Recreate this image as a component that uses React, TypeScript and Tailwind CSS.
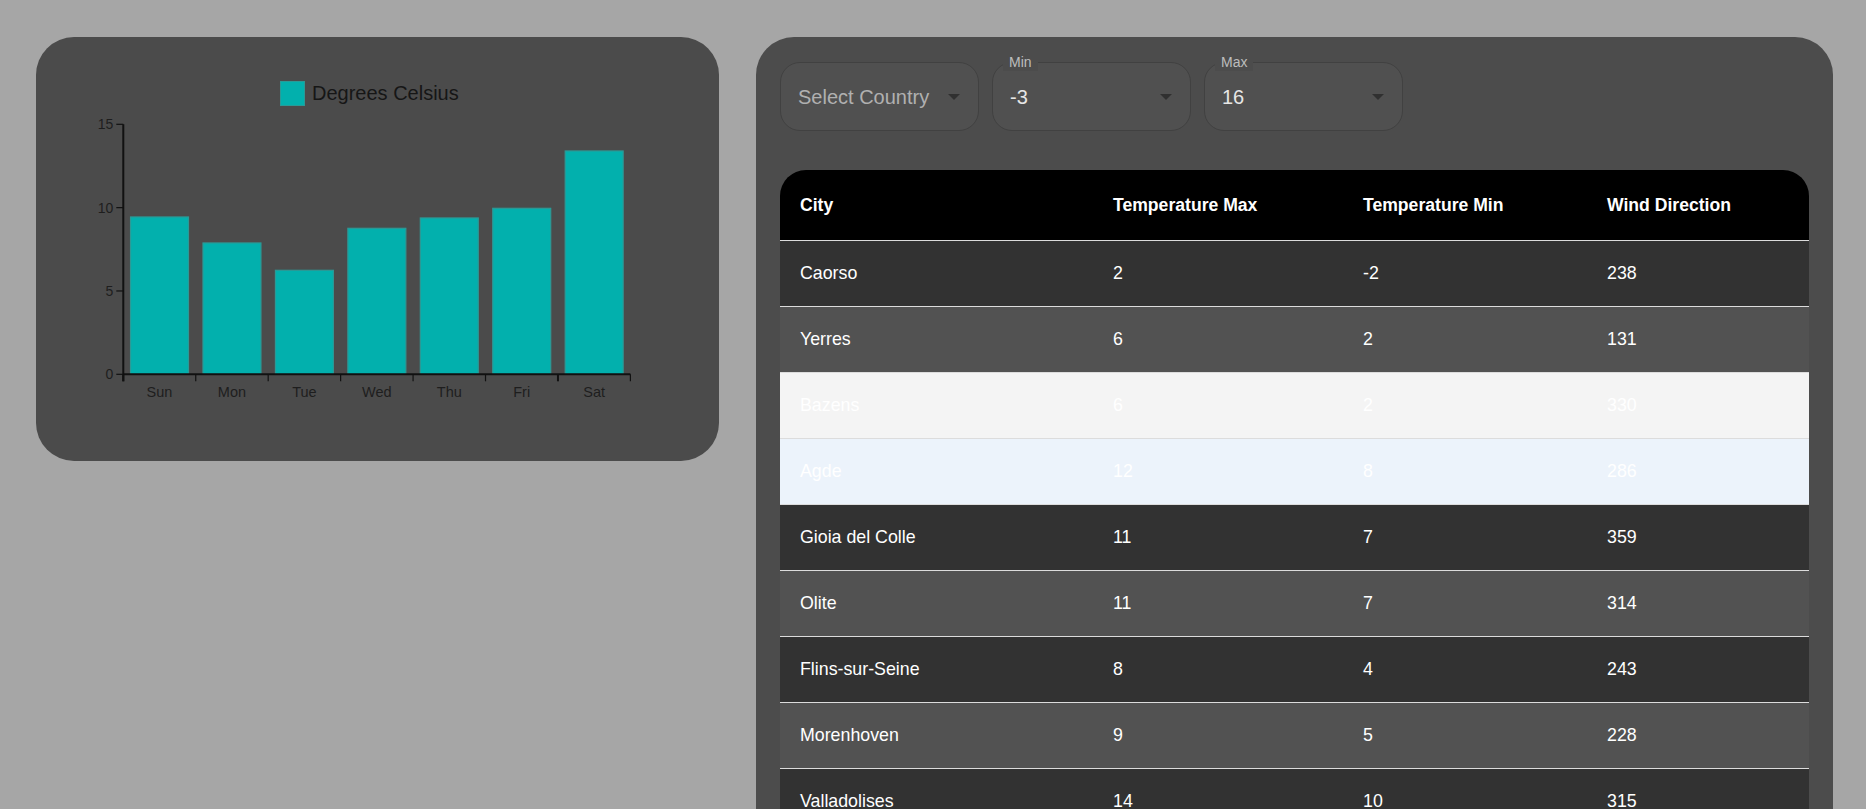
import React from 'react';

const font = { fontFamily: '"Liberation Sans", Arial, sans-serif' };

const temps = [9.44, 7.88, 6.24, 8.76, 9.38, 9.96, 13.4];
const days = ['Sun', 'Mon', 'Tue', 'Wed', 'Thu', 'Fri', 'Sat'];

const rows = [
    { city: 'Caorso', max: '2', min: '-2', wind: '238', bg: 'bg-[#323232]' },
    { city: 'Yerres', max: '6', min: '2', wind: '131', bg: 'bg-[#525252]' },
    { city: 'Bazens', max: '6', min: '2', wind: '330', bg: 'bg-[#f4f4f4]' },
    { city: 'Agde', max: '12', min: '8', wind: '286', bg: 'bg-[#ecf3fb]' },
    { city: 'Gioia del Colle', max: '11', min: '7', wind: '359', bg: 'bg-[#323232]' },
    { city: 'Olite', max: '11', min: '7', wind: '314', bg: 'bg-[#525252]' },
    { city: 'Flins-sur-Seine', max: '8', min: '4', wind: '243', bg: 'bg-[#323232]' },
    { city: 'Morenhoven', max: '9', min: '5', wind: '228', bg: 'bg-[#525252]' },
    { city: 'Valladolises', max: '14', min: '10', wind: '315', bg: 'bg-[#323232]' },
    { city: 'Porto', max: '15', min: '11', wind: '270', bg: 'bg-[#525252]' },
];

const BarChart = () => {
    const x0 = 87.3;
    const y0 = 337.3;
    const top = 87.3;
    const unit = (y0 - top) / 15;
    const slot = (594.4 - x0) / 7;

    return (
        <svg width="683" height="424" viewBox="0 0 683 424" style={font}>
            {/* legend */}
            <rect x="244.5" y="44.5" width="24" height="24" fill="#02b0ad" stroke="#2a9a97" />
            <text x="276" y="63" fontSize="20" fill="#161616">
                Degrees Celsius
            </text>

            {/* bars */}
            {temps.map((t, i) => (
                <rect
                    key={days[i]}
                    x={x0 + i * slot + slot * 0.1}
                    y={y0 - t * unit}
                    width={slot * 0.8}
                    height={t * unit}
                    fill="#02b0ad"
                    stroke="#2d9996"
                    strokeWidth="1.2"
                />
            ))}

            {/* y axis */}
            <line x1={x0} y1={top} x2={x0} y2={y0 + 7} stroke="#111" strokeWidth="2" />
            {[0, 5, 10, 15].map((v) => (
                <g key={v}>
                    <line x1={x0 - 7} y1={y0 - v * unit} x2={x0} y2={y0 - v * unit} stroke="#111" strokeWidth="1.2" />
                    <text x={x0 - 10} y={y0 - v * unit + 5} fontSize="14" fill="#1e1e1e" textAnchor="end">
                        {v}
                    </text>
                </g>
            ))}

            {/* x axis */}
            <line x1={x0} y1={y0} x2={x0 + slot * 7} y2={y0} stroke="#111" strokeWidth="2" />
            {Array.from({ length: 8 }).map((_, i) => (
                <line
                    key={i}
                    x1={x0 + i * slot}
                    y1={y0}
                    x2={x0 + i * slot}
                    y2={y0 + 7}
                    stroke="#111"
                    strokeWidth={i === 0 || i === 6 ? 2 : 1.2}
                />
            ))}
            {days.map((d, i) => (
                <text key={d} x={x0 + i * slot + slot / 2} y={y0 + 23} fontSize="14.5" fill="#1e1e1e" textAnchor="middle">
                    {d}
                </text>
            ))}
        </svg>
    );
};

const Caret = () => (
    <svg width="12" height="6" viewBox="0 0 12 6" className="shrink-0">
        <path d="M0 0 L12 0 L6 6 Z" fill="#303030" />
    </svg>
);

const SelectBox = ({ label, value, placeholder }: { label?: string; value?: string; placeholder?: string }) => (
    <div className="relative w-[199px] h-[69px] rounded-[20px] border border-[#414141] bg-[#505050] flex items-center justify-between pl-[17px] pr-[18px]">
        {label && (
            <span className="absolute -top-[10px] left-[10px] px-[6px] bg-[#4c4c4c] text-[14px] leading-[18px] text-[#bdbdbd]">
                {label}
            </span>
        )}
        {placeholder ? (
            <span className="text-[20px] text-[#b0b0b0]">{placeholder}</span>
        ) : (
            <span className="text-[20px] text-[#e6e6e6]">{value}</span>
        )}
        <Caret />
    </div>
);

const App = () => {
    return (
        <div className="min-h-[809px] bg-[#a6a6a6] pl-[36px] pt-[37px] flex items-start gap-[37px]" style={font}>
            <div className="w-[683px] h-[424px] rounded-[38px] bg-[#4b4b4b] shrink-0">
                <BarChart />
            </div>

            <div className="w-[1077px] rounded-t-[38px] bg-[#4c4c4c] px-[24px] pt-[25px] shrink-0 pb-[40px]">
                <div className="flex gap-[13px]">
                    <SelectBox placeholder="Select Country" />
                    <SelectBox label="Min" value="-3" />
                    <SelectBox label="Max" value="16" />
                </div>

                <div className="mt-[39px] rounded-t-[26px] overflow-hidden">
                    <div className="grid grid-cols-[313px_250px_244px_1fr] h-[71px] items-center bg-black border-b border-[#dcdcdc] text-white font-bold text-[17.6px]">
                        <div className="px-[20px]">City</div>
                        <div className="px-[20px]">Temperature Max</div>
                        <div className="px-[20px]">Temperature Min</div>
                        <div className="px-[20px]">Wind Direction</div>
                    </div>
                    {rows.map((r) => (
                        <div
                            key={r.city}
                            className={`grid grid-cols-[313px_250px_244px_1fr] h-[66px] items-center border-b border-[#dcdcdc] text-white text-[17.8px] ${r.bg}`}
                        >
                            <div className="px-[20px]">{r.city}</div>
                            <div className="px-[20px]">{r.max}</div>
                            <div className="px-[20px]">{r.min}</div>
                            <div className="px-[20px]">{r.wind}</div>
                        </div>
                    ))}
                </div>
            </div>
        </div>
    );
};

export default App;
